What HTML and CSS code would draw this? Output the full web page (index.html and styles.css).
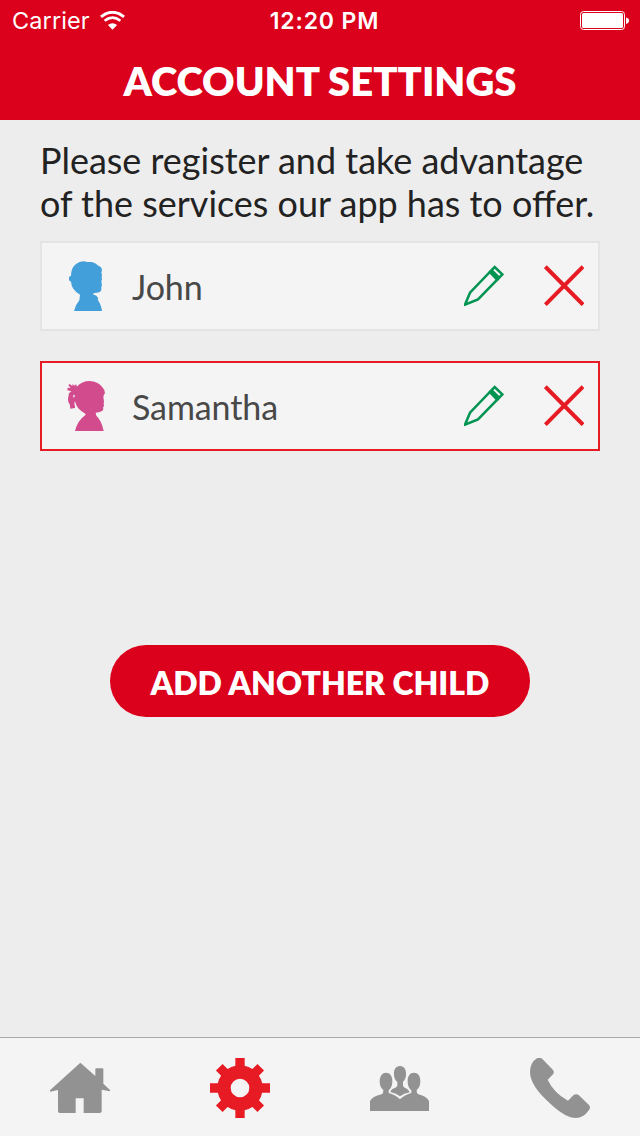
FILE: index.html
```html
<!DOCTYPE html>
<html lang="en">
<head>
<meta charset="utf-8">
<title>Account Settings</title>
<link rel="stylesheet" href="styles.css">
</head>
<body>
<div class="app">
  <header class="header">
    <div class="status">
      <div class="carrier"><span>Carrier</span>
        <svg class="wifi" viewBox="300 32 76 56"><path d="M303 49Q338 21 373 49" fill="none" stroke="#fff" stroke-width="9"/><path d="M314 61Q338 42 362 61" fill="none" stroke="#fff" stroke-width="8"/><path d="M324 74Q338 62 352 74L338 88Z" fill="#fff"/></svg>
      </div>
      <div class="time">12:20 PM</div>
      <svg class="battery" viewBox="0 0 50 20"><rect x=".5" y="1.5" width="44" height="18" rx="3" fill="none" stroke="#fff"/><rect x="2" y="3" width="41" height="15" rx="1.5" fill="#fff"/><path d="M46 7.5Q49 8 49 10.5T46 14Z" fill="#fff"/></svg>
    </div>
    <h1 class="title">ACCOUNT SETTINGS</h1>
  </header>
  <main class="content">
    <p class="intro">Please register and take advantage<br>of the services our app has to offer.</p>
    <div class="child">
      <svg class="avatar boy" viewBox="90 72 126 156"><path d="M114 225Q118 207 130 193L132 176Q119 168 112 158Q106 150 105 137L99 133V123L105 119Q105 98 116 88Q128 76 145 76L153 78H168Q180 81 187 89Q198 93 198 103L196 110L198 116L197 124L198 130L196 136L198 148L196 153V162Q194 171 174 171L171 175L181 179L187 187L185 191Q195 204 198 225Z"/></svg>
      <span class="name">John</span>
      <svg class="pencil" viewBox="42 45 120 123"><path d="M45 164L60 128L134 51L157 73L84 148Z"/><path d="M120 66L142 89"/><path class="band" d="M120 66L125 61L147 83L142 89Z"/></svg>
      <svg class="remove" viewBox="282 45 120 123"><path d="M286 50L399 164M399 50L286 164"/></svg>
    </div>
    <div class="child selected">
      <svg class="avatar girl" viewBox="90 72 126 156"><path fill-rule="evenodd" d="M117 225Q123 195 149 176Q148 171 141 169Q122 157 118 139L116 136L115 144L117 150V156L103 158L101 145L97 138L96 128L99 112L106 106L94 103L95 95L104 96L97 88L101 84L109 90L110 83L114 89L121 85L122 92Q138 75 160 75Q187 77 198 92L205 102L207 113L204 115L202 124L204 136L203 143L204 149L201 155L202 160Q200 169 179 170L181 179Q196 192 203 225ZM113 116L111 123L114 125L117 118Z"/></svg>
      <span class="name">Samantha</span>
      <svg class="pencil" viewBox="42 45 120 123"><path d="M45 164L60 128L134 51L157 73L84 148Z"/><path d="M120 66L142 89"/><path class="band" d="M120 66L125 61L147 83L142 89Z"/></svg>
      <svg class="remove" viewBox="282 45 120 123"><path d="M286 50L399 164M399 50L286 164"/></svg>
    </div>
    <button class="add">ADD ANOTHER CHILD</button>
  </main>
  <nav class="tabs">
    <svg class="tab" viewBox="30 84 180 180"><path d="M30 181L121 98L166 138V117Q166 115 169 115H187Q190 115 190 118V161L210 180V184L185 179V244Q185 249 179 249H131V205H107V249H60Q54 249 54 243V180L30 185Z"/></svg>
    <svg class="tab active" viewBox="-90 -90 180 180"><path fill-rule="evenodd" d="M-68 0A68 68 0 1 0 68 0A68 68 0 1 0-68 0ZM-28 0A28 28 0 1 1 28 0A28 28 0 1 1-28 0Z"/><path d="M-14-90H14V-60H-14ZM-14 60H14V90H-14ZM-90-14H-60V14H-90ZM60-14H90V14H60Z"/><path transform="rotate(45)" d="M-14-88H14V-60H-14ZM-14 60H14V88H-14ZM-88-14H-60V14H-88ZM60-14H88V14H60Z"/></svg>
    <svg class="tab" viewBox="30 84 180 180"><path d="M120 108C133 108 139 120 138 134C137 147 133 150 129 156V168L134 173Q145 176 149 187Q132 190 120 199Q109 190 91 186Q94 176 106 173L112 168V156C107 150 103 147 102 134C101 120 107 108 120 108Z"/><path d="M30 243V213Q36 200 65 193Q71 190 70 180C62 173 59 165 59 152C60 137 67 128 78 128C90 128 97 138 97 152C97 166 94 173 86 181V189Q104 193 120 208Q136 193 154 189V181C146 173 143 166 143 152C143 138 150 128 162 128C174 128 181 137 181 152C181 165 178 173 170 180Q169 190 175 193Q201 200 207 213V243Z"/></svg>
    <svg class="tab" viewBox="30 84 180 180"><path d="M52 84H62Q66 85 68 88L99 120Q104 127 99 133L83 149Q101 188 144 212L160 196Q168 190 176 195L207 225Q213 232 207 240Q190 264 168 264Q137 264 91 221Q31 169 30 127Q30 97 52 84Z"/></svg>
  </nav>
</div>
</body>
</html>
```
FILE: styles.css
```css
* { box-sizing: border-box; }
body { margin: 0; }
svg { display: block; flex: none; }
.app {
  display: flex;
  flex-direction: column;
  width: 640px;
  height: 1136px;
  background: #ededed;
  font-family: Lato, sans-serif;
}
.header { height: 120px; background: #db001b; color: #fff; }
.status {
  display: grid;
  grid-template-columns: 1fr auto 1fr;
  align-items: center;
  height: 41px;
  padding: 1px 10px 0 12px;
  font: 23.5px/40px Inter, sans-serif;
}
.carrier { display: flex; align-items: center; gap: 10px; letter-spacing: 0.1px; }
.wifi { width: 25px; height: 19px; margin-top: -1px; }
.time { padding-left: 7px; font-size: 23px; font-weight: 600; letter-spacing: 0.85px; }
.battery { width: 50px; height: 20px; margin-top: -2px; justify-self: end; }
.title {
  margin: 0;
  font-size: 40px;
  font-weight: 800;
  line-height: 80px;
  text-align: center;
}
.content {
  display: flex;
  flex: 1;
  flex-direction: column;
  padding: 19px 40px 0;
}
.intro {
  margin: 0 0 16px;
  color: #222;
  font-size: 35.95px;
  line-height: 43px;
  white-space: nowrap;
}
.child {
  display: flex;
  align-items: center;
  height: 90px;
  margin-bottom: 30px;
  padding: 0 14px 0 24px;
  border: 2px solid #e4e4e4;
  background: #f4f4f4;
}
.selected { border-color: #e71b23; }
.avatar { width: 42px; height: 52px; margin-right: 24px; }
.boy { fill: #439fda; }
.girl { fill: #d14b8d; }
.name { flex: 1; color: #484848; font-size: 34px; letter-spacing: -0.1px; line-height: 44px; padding-top: 2px; }
.pencil, .remove { width: 40px; height: 41px; margin-top: -1px; fill: none; }
.pencil { margin-right: 40px; stroke: #009452; stroke-width: 7.5; }
.pencil .band { fill: #009452; }
.remove { stroke: #e71b23; stroke-width: 12; }
.add {
  align-self: center;
  width: 420px;
  height: 72px;
  margin-top: 164px;
  padding: 2px 0 0;
  border: 0;
  border-radius: 36px;
  background: #db001b;
  color: #fff;
  font: 800 32px/72px Lato, sans-serif;
}
.tabs {
  display: grid;
  grid-template-columns: repeat(4, 1fr);
  place-items: center;
  height: 99px;
  padding-top: 2px;
  border-top: 1px solid #a8a8a8;
  background: #f4f4f4;
}
.tab { width: 60px; height: 60px; fill: #929292; }
.active { fill: #e71b23; }
```
